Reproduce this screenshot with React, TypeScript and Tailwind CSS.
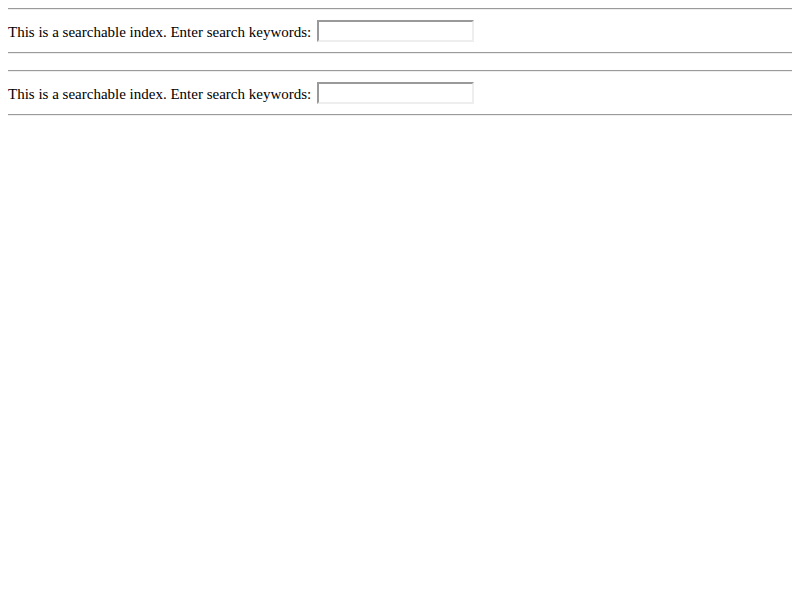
export default function App() {
  const blocks = [0, 1];
  return (
    <div className="flex flex-col gap-4 bg-white p-2 text-black min-h-[600px]" style={{ fontFamily: '"Liberation Serif", serif' }}>
      {blocks.map((b) => (
        <div key={b} className="flex flex-col">
          <div className="h-[2px] border-t border-t-[#9a9a9a] border-b border-b-[#eeeeee]" />
          <div className="flex items-center py-[10px] text-[15px] leading-[22px]">
            <span className="translate-y-[1px]">This is a searchable index. Enter search keywords:</span>
            <input
              type="text"
              className="ml-[6px] h-[22px] w-[157px] border-2 border-t-[#999999] border-l-[#999999] border-b-[#eeeeee] border-r-[#eeeeee] bg-white outline-none"
            />
          </div>
          <div className="h-[2px] border-t border-t-[#9a9a9a] border-b border-b-[#eeeeee]" />
        </div>
      ))}
    </div>
  );
}
